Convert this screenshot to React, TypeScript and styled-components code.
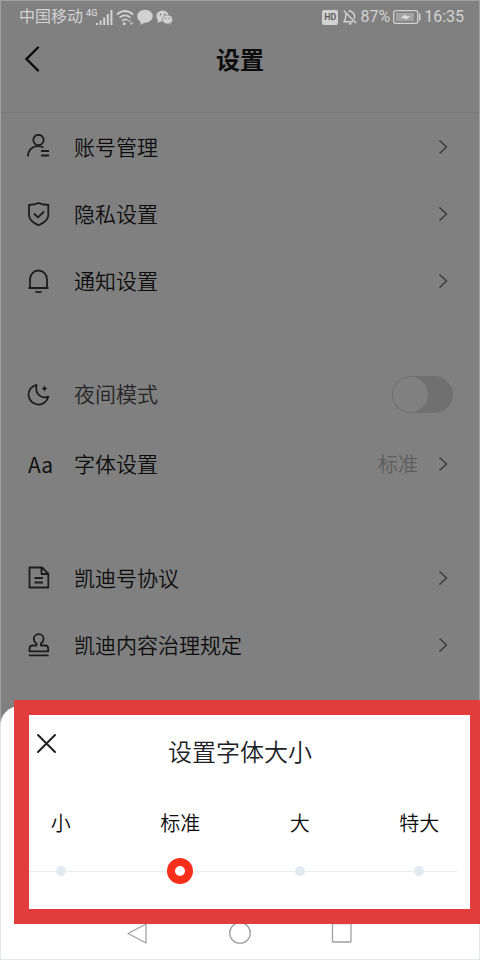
import React, { useState } from "react";
import styled, { createGlobalStyle } from "styled-components";

const GlobalStyle = createGlobalStyle`
  * { box-sizing: border-box; }
  body {
    margin: 0;
    background: #808080;
    font-family: Roboto, "Noto Sans CJK SC", sans-serif;
    color: #0c0c0c;
  }
  button, input { font: inherit; color: inherit; margin: 0; }
`;

const Screen = styled.div`
  position: relative;
  display: flex;
  flex-direction: column;
  height: 100vh;
  padding: 1px;
  overflow: hidden;
  background: #808080;
  box-shadow: inset 0 0 0 1px #a2a2a2;
`;

const StatusBar = styled.div`
  display: flex;
  justify-content: space-between;
  align-items: center;
  height: 32px;
  padding: 0 15px 0 18px;
  font-size: 16px;
  line-height: 20px;
  color: #d2d2d2;
`;

const StatusGroup = styled.div`
  display: flex;
  align-items: center;
  gap: 3px;
`;

const Network = styled.span`
  align-self: flex-start;
  margin-right: -4px;
  font-size: 9px;
  line-height: 12px;
  font-weight: 500;
`;

const HdBadge = styled.span`
  padding: 0 2px;
  margin-right: 2px;
  border-radius: 2px;
  background: #d2d2d2;
  color: #606060;
  font-size: 9px;
  font-weight: 700;
  line-height: 15px;
`;

const Header = styled.header`
  display: grid;
  grid-template-columns: 60px 1fr 60px;
  align-items: center;
  height: 80px;
  padding-bottom: 24px;
  border-bottom: 1px solid #797979;
`;

const BackButton = styled.button`
  display: flex;
  align-items: center;
  height: 40px;
  padding: 0 0 3px 22px;
  border: 0;
  background: none;
`;

const Title = styled.h1`
  margin: 0;
  text-align: center;
  font-size: 24px;
  line-height: 36px;
  font-weight: 700;
`;

const Group = styled.ul`
  list-style: none;
  margin: 0 0 45px;
  padding: 0;
`;

const Item = styled.li<{ $tall?: boolean }>`
  height: ${(p) => (p.$tall ? 70 : 67)}px;
`;

const RowButton = styled.button`
  display: flex;
  align-items: center;
  width: 100%;
  height: 100%;
  padding: 0 31px 0 25px;
  border: 0;
  background: none;
  text-align: left;
`;

const SwitchRow = styled.label`
  display: flex;
  align-items: center;
  height: 100%;
  padding: 0 26px 0 25px;
  color: #252525;
`;

const IconSlot = styled.span`
  display: flex;
  flex: 0 0 48px;
  color: #1c1c1c;
  font-size: 20px;
  line-height: 24px;
`;

const LetterIcon = styled.span`
  padding-left: 2px;
  font-family: "Noto Sans CJK SC", sans-serif;
  font-weight: 400;
  font-size: 21px;
  color: #101010;
`;

const RowLabel = styled.span`
  flex: 1;
  padding-top: 2px;
  font-size: 21px;
  line-height: 30px;
  font-weight: 350;
`;

const RowValue = styled.span`
  margin-right: 20px;
  padding-top: 2px;
  font-size: 20px;
  line-height: 30px;
  font-weight: 350;
  color: #5d5d5d;
`;

const Switch = styled.input`
  appearance: none;
  display: flex;
  width: 61px;
  height: 37px;
  padding: 1px;
  border-radius: 19px;
  background: #707070;
  &::before {
    content: "";
    width: 35px;
    height: 35px;
    border-radius: 50%;
    background: #808080;
  }
  &:checked { justify-content: flex-end; }
`;

const Sheet = styled.section`
  position: absolute;
  left: 0;
  right: 0;
  bottom: 0;
  height: 254px;
  display: flex;
  flex-direction: column;
  border: 1px solid #e4e7ea;
  border-top: 0;
  border-radius: 20px 20px 0 0;
  background: #fff;
`;

const SheetHeader = styled.div`
  display: grid;
  grid-template-columns: 66px 1fr 66px;
  height: 90px;
  padding-top: 27px;
`;

const CloseButton = styled.button`
  display: flex;
  align-self: start;
  padding: 0 0 0 35px;
  border: 0;
  background: none;
  color: #202126;
`;

const SheetTitle = styled.h2`
  margin: 0;
  padding-top: 2px;
  text-align: center;
  font-size: 24px;
  line-height: 36px;
  font-weight: 350;
  color: #202126;
`;

const SizeScale = styled.div`
  display: grid;
  grid-template-columns: repeat(4, 1fr);
  flex: 1;
`;

const SizeOption = styled.label`
  display: flex;
  flex-direction: column;
  align-items: center;
  gap: 17px;
  padding-top: 13px;
  font-size: 20px;
  line-height: 30px;
  font-weight: 350;
`;

const Stop = styled.span<{ $edge?: "start" | "end" }>`
  display: flex;
  align-items: center;
  align-self: stretch;
  height: 30px;
  &::before, &::after {
    content: "";
    flex: 1;
    height: 1px;
    background: #e8edf2;
  }
  &::after {
    background: ${(p) => (p.$edge === "end" ? "linear-gradient(to left, transparent 22px, #e8edf2 22px)" : "#e8edf2")};
  }
  &::before {
    background: ${(p) => (p.$edge === "start" ? "linear-gradient(to right, transparent 27px, #e8edf2 27px)" : "#e8edf2")};
  }
`;

const Radio = styled.input`
  appearance: none;
  width: 10px;
  height: 10px;
  border-radius: 50%;
  background: #e2e9f0;
  &:checked {
    width: 26px;
    height: 26px;
    border: 8px solid #f92f1c;
    background: #fff;
  }
`;

const NavBar = styled.nav`
  display: flex;
  justify-content: center;
  gap: 78px;
  height: 37px;
`;

const NavButton = styled.button`
  display: flex;
  align-items: flex-start;
  padding: 0;
  border: 0;
  background: none;
  color: #a0a0a0;
`;

const Highlight = styled.div`
  position: absolute;
  left: 14px;
  right: 0;
  bottom: 36px;
  height: 224px;
  border: 15px solid #e33c3d;
  border-right-width: 10px;
  pointer-events: none;
`;

const icons = {
  user: (
    <>
      <circle cx="12.5" cy="6" r="5.2" />
      <path d="M2 22.5C2 16 6.2 12.2 12 12.2c2 0 3.900.4 5.400 1.400M15 17h8M15 21.500h8" />
    </>
  ),
  shield: (
    <path d="M3 4q5.500-.2 9.500-2 4 1.800 9.800 2v10q0 6-9.800 10.300Q3 20 3 14ZM8 12.500l4 3.800 6-5.800" />
  ),
  bell: (
    <>
      <path d="M4 20V11.500a8.500 9 0 0 1 17 0V20M2.500 20h20" />
      <path d="M9.500 23.500q3 1.500 6 0" />
    </>
  ),
  moon: (
    <>
      <path d="M10.500 2.800A10 10 0 1 0 22.300 14.600C17 17 8.500 13.500 10.500 2.800Z" />
      <path d="m18.500 3.500 1.100 1.900 1.900 1.100-1.900 1.100-1.100 1.900-1.100-1.900-1.900-1.100 1.900-1.100Z" fill="currentColor" stroke="none" />
    </>
  ),
  doc: (
    <path d="M3.500 2.500H16l6.300 6.200v13.800H3.500ZM15.500 2.500v6.500h6.500M8.500 13h8.500M8.500 17.500h8.500" />
  ),
  stamp: (
    <path d="M10.500 13.500v-2Q7.800 9.700 7.800 7a4.900 4.900 0 0 1 9.800 0q0 2.700-2.700 4.500v2H19q3.200 0 3.200 3v2.800H3.500v-2.800q0-3 3.200-3ZM2.800 23.300h19.800" />
  ),
};

function Icon({ name }: { name: keyof typeof icons }) {
  return (
    <svg width="25" height="25" viewBox="0 0 25 25" fill="none" stroke="currentColor" strokeWidth="1.800" strokeLinejoin="round" aria-hidden="true">
      {icons[name]}
    </svg>
  );
}

function Chevron() {
  return (
    <svg width="10" height="16" viewBox="0 0 10 16" fill="none" stroke="#393939" strokeWidth="1.400" aria-hidden="true">
      <path d="M1.500 1.500 8.500 8l-7 6.500" />
    </svg>
  );
}

function LinkRow({ icon, label, value, tall }: { icon: React.ReactNode; label: string; value?: string; tall?: boolean }) {
  return (
    <Item $tall={tall}>
      <RowButton type="button">
        <IconSlot>{icon}</IconSlot>
        <RowLabel>{label}</RowLabel>
        {value && <RowValue>{value}</RowValue>}
        <Chevron />
      </RowButton>
    </Item>
  );
}

function Signal() {
  return (
    <svg width="17" height="17" viewBox="0 0 17 17" fill="currentColor" aria-hidden="true">
      <path d="M0 14h2v2H0zM3.600 11.500h2V16h-2zM7.200 8.500h2V16h-2zM10.800 5h2v11h-2zM14.400 1h2v15h-2z" />
    </svg>
  );
}

function Wifi() {
  return (
    <svg width="18" height="16" viewBox="0 0 18 16" fill="none" stroke="currentColor" strokeWidth="1.700" aria-hidden="true">
      <path d="M1 5.500q8-7 16 0M3.500 8.700q5.500-4.500 11 0M6 11.800q3-2.500 5.500-.5" />
      <path d="M7 13.500h2.500V16H7zM12 12.500l1.500-2 1 2zM14 13.500h3L15.500 16z" fill="currentColor" stroke="none" />
    </svg>
  );
}

function Chat() {
  return (
    <svg width="16" height="16" viewBox="0 0 16 16" fill="currentColor" aria-hidden="true">
      <ellipse cx="8" cy="7.200" rx="7.700" ry="6.500" />
      <path d="m3 11 1 4.800 5-3Z" />
    </svg>
  );
}

function WeChat() {
  return (
    <svg width="17" height="15" viewBox="0 0 17 15" fill="currentColor" aria-hidden="true">
      <ellipse cx="6.500" cy="6" rx="6.200" ry="5.500" />
      <path d="m2 9-.5 4 4-2ZM14 11l1 3.500-4-1.500Z" />
      <ellipse cx="11.500" cy="9.500" rx="5.200" ry="4.500" stroke="#808080" strokeWidth=".7" />
      <g fill="#808080">
        <circle cx="4.500" cy="4.500" r=".9" />
        <circle cx="8.600" cy="4.500" r=".9" />
        <circle cx="9.800" cy="8.500" r=".7" />
        <circle cx="13.200" cy="8.500" r=".7" />
      </g>
    </svg>
  );
}

function MutedBell() {
  return (
    <svg width="14" height="16" viewBox="0 0 14 16" fill="none" stroke="currentColor" strokeWidth="1.400" aria-hidden="true">
      <path d="M5.500 3q1.500-2.500 3 0 3 1 3 4v3M3 5q-.5 1.500-.5 4.500L1 12.800h9M6 14.800h2.500M.8 1.800l12.500 12.500" />
    </svg>
  );
}

function Battery() {
  return (
    <svg width="28" height="14" viewBox="0 0 28 14" fill="none" aria-hidden="true">
      <rect x=".7" y=".7" width="24" height="12.600" rx="2" stroke="currentColor" strokeWidth="1.300" />
      <rect x="3" y="3" width="18" height="8" fill="#a3a3a3" />
      <path d="m7.500 8 5-3.500.8 1.700h4.200l-5 3.500-.8-1.700Z" fill="#e4e4e4" />
      <path d="M26 3.500h1.500v7H26z" fill="currentColor" />
    </svg>
  );
}

const sizes = ["小", "标准", "大", "特大"];

export default function App() {
  const [size, setSize] = useState("标准");
  const [night, setNight] = useState(false);

  return (
    <Screen>
      <GlobalStyle />
      <StatusBar>
        <StatusGroup>
          <span>中国移动</span>
          <Network>4G</Network>
          <Signal />
          <Wifi />
          <Chat />
          <WeChat />
        </StatusGroup>
        <StatusGroup>
          <HdBadge>HD</HdBadge>
          <MutedBell />
          <span>87%</span>
          <Battery />
          <span>16:35</span>
        </StatusGroup>
      </StatusBar>

      <Header>
        <BackButton type="button" aria-label="返回">
          <svg width="18" height="28" viewBox="0 0 18 28" fill="none" stroke="currentColor" strokeWidth="2.400" strokeLinecap="round">
            <path d="M15 2.500 3.500 14 15 25.500" />
          </svg>
        </BackButton>
        <Title>设置</Title>
      </Header>

      <Group>
        <LinkRow icon={<Icon name="user" />} label="账号管理" />
        <LinkRow icon={<Icon name="shield" />} label="隐私设置" />
        <LinkRow icon={<Icon name="bell" />} label="通知设置" />
      </Group>
      <Group>
        <Item $tall>
          <SwitchRow>
            <IconSlot><Icon name="moon" /></IconSlot>
            <RowLabel>夜间模式</RowLabel>
            <Switch type="checkbox" role="switch" checked={night} onChange={(e) => setNight(e.target.checked)} />
          </SwitchRow>
        </Item>
        <LinkRow tall icon={<LetterIcon>Aa</LetterIcon>} label="字体设置" value={size} />
      </Group>
      <Group>
        <LinkRow icon={<Icon name="doc" />} label="凯迪号协议" />
        <LinkRow icon={<Icon name="stamp" />} label="凯迪内容治理规定" />
      </Group>

      <Sheet>
        <SheetHeader>
          <CloseButton type="button" aria-label="关闭">
            <svg width="21" height="21" viewBox="0 0 21 21" fill="none" stroke="currentColor" strokeWidth="2" strokeLinecap="round">
              <path d="m2 2 17 17M19 2 2 19" />
            </svg>
          </CloseButton>
          <SheetTitle>设置字体大小</SheetTitle>
        </SheetHeader>
        <SizeScale role="radiogroup" aria-label="设置字体大小">
          {sizes.map((s, i) => (
            <SizeOption key={s}>
              {s}
              <Stop $edge={i === 0 ? "start" : i === sizes.length - 1 ? "end" : undefined}>
                <Radio type="radio" name="font-size" value={s} checked={size === s} onChange={() => setSize(s)} />
              </Stop>
            </SizeOption>
          ))}
        </SizeScale>
        <NavBar>
          <NavButton type="button" aria-label="返回上一页">
            <svg width="24" height="24" viewBox="0 0 24 24" fill="none" stroke="currentColor" strokeWidth="1.300" strokeLinejoin="round">
              <path d="M20 2v19L2 11.500Z" />
            </svg>
          </NavButton>
          <NavButton type="button" aria-label="主屏幕">
            <svg width="24" height="24" viewBox="0 0 24 24" fill="none" stroke="currentColor" strokeWidth="1.300">
              <circle cx="12" cy="11" r="10.300" />
            </svg>
          </NavButton>
          <NavButton type="button" aria-label="最近任务">
            <svg width="24" height="24" viewBox="0 0 24 24" fill="none" stroke="currentColor" strokeWidth="1.300">
              <rect x="2.500" y="1.500" width="18.500" height="18.500" rx=".5" />
            </svg>
          </NavButton>
        </NavBar>
      </Sheet>
      <Highlight />
    </Screen>
  );
}
